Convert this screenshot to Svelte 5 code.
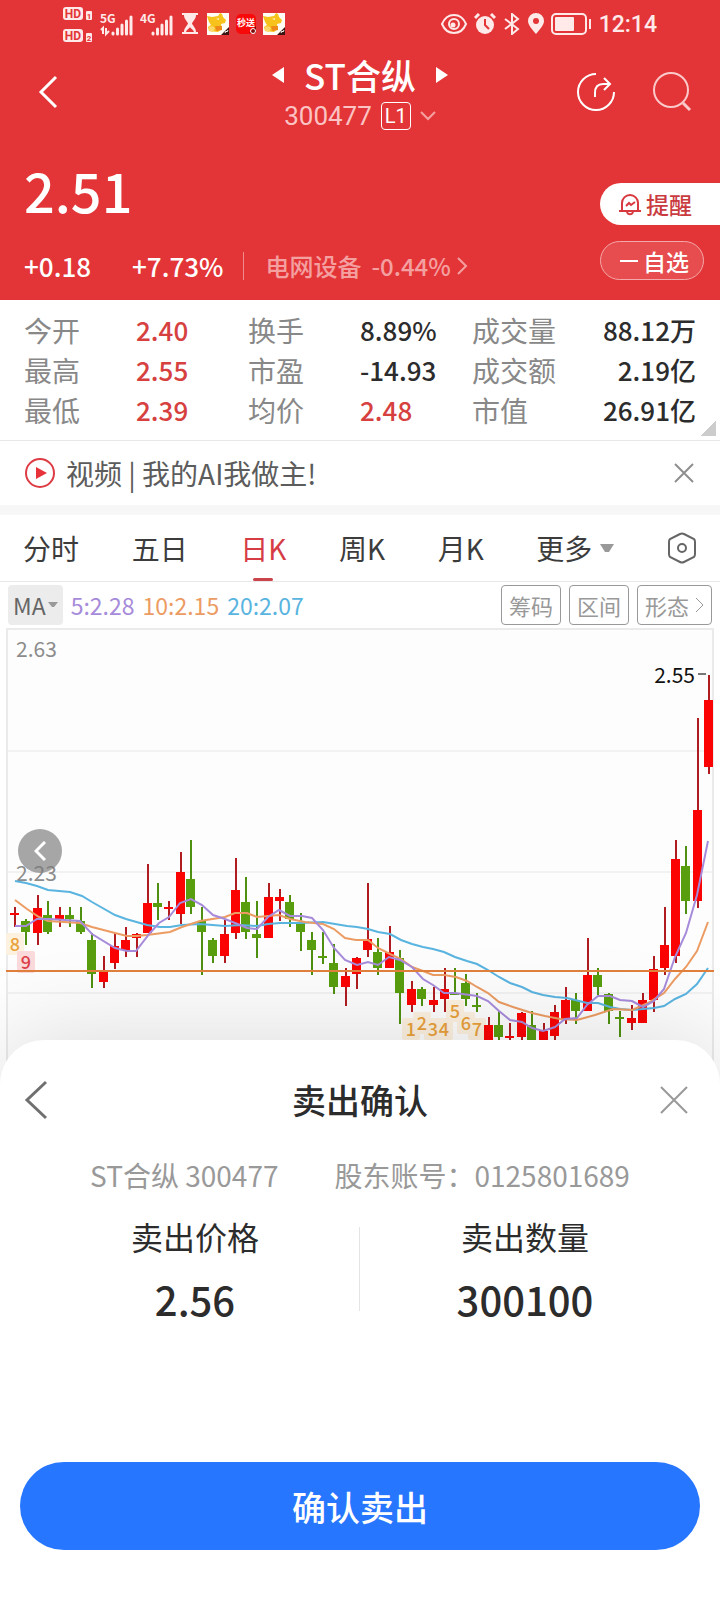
<script lang="ts">
  type Candle = [x: number, high: number, top: number, bottom: number, low: number, up: number];

  const stats = [
    { label: "今开", value: "2.40", up: true },
    { label: "换手", value: "8.89%" },
    { label: "成交量", value: "88.12万" },
    { label: "最高", value: "2.55", up: true },
    { label: "市盈", value: "-14.93" },
    { label: "成交额", value: "2.19亿" },
    { label: "最低", value: "2.39", up: true },
    { label: "均价", value: "2.48", up: true },
    { label: "市值", value: "26.91亿" },
  ];

  const tabs = ["分时", "五日", "日K", "周K", "月K"];
  let activeTab = $state("日K");

  // x, high, body top, body bottom, low, 1 = rise / 0 = fall
  const candles: Candle[] = [
    [15, 279, 285, 287, 299, 1], [26, 291, 293, 304, 317, 0], [38, 267, 280, 305, 317, 1],
    [48, 273, 287, 304, 306, 0], [60, 279, 287, 292, 299, 1], [70, 279, 287, 291, 299, 0],
    [81, 279, 293, 304, 306, 0], [92, 305, 312, 346, 360, 0], [104, 328, 343, 354, 360, 1],
    [115, 305, 318, 335, 341, 1], [126, 299, 312, 322, 329, 1], [137, 305, 306, 310, 329, 1],
    [148, 236, 275, 305, 305, 1], [158, 255, 275, 279, 292, 0], [169, 273, 279, 281, 292, 1],
    [181, 224, 244, 286, 296, 1], [191, 212, 251, 279, 286, 0], [202, 279, 293, 304, 347, 0],
    [213, 310, 312, 328, 335, 0], [225, 292, 306, 328, 335, 1], [236, 230, 262, 305, 311, 1],
    [246, 249, 274, 304, 311, 0], [257, 273, 306, 310, 330, 0], [269, 255, 269, 310, 310, 1],
    [280, 261, 269, 273, 293, 1], [290, 267, 274, 291, 299, 0], [301, 285, 295, 304, 323, 0],
    [312, 304, 312, 322, 347, 0], [323, 304, 328, 330, 336, 0], [334, 316, 335, 359, 366, 0],
    [346, 340, 348, 359, 378, 1], [357, 329, 330, 346, 361, 1], [368, 255, 311, 322, 329, 1],
    [378, 310, 324, 340, 347, 0], [390, 298, 324, 340, 340, 1], [400, 322, 330, 365, 396, 0],
    [412, 353, 361, 377, 384, 1], [422, 359, 361, 371, 378, 0], [434, 359, 372, 377, 384, 1],
    [445, 340, 361, 371, 384, 1], [455, 340, 365, 367, 367, 0], [466, 346, 355, 371, 378, 0],
    [477, 365, 377, 379, 384, 0], [489, 389, 397, 415, 415, 1], [499, 383, 397, 409, 415, 0],
    [510, 395, 408, 410, 415, 1], [522, 384, 385, 409, 415, 1], [532, 383, 397, 415, 415, 0],
    [544, 395, 403, 415, 415, 1], [555, 377, 384, 408, 415, 1], [566, 359, 372, 391, 396, 1],
    [576, 365, 372, 383, 396, 0], [588, 310, 347, 383, 383, 1], [598, 340, 347, 359, 367, 0],
    [609, 365, 366, 383, 396, 0], [620, 383, 389, 391, 409, 0], [632, 377, 390, 395, 402, 1],
    [643, 365, 372, 395, 395, 1], [654, 328, 341, 372, 384, 1], [665, 279, 317, 340, 347, 1],
    [676, 212, 231, 328, 335, 1], [686, 218, 238, 273, 286, 0], [698, 90, 182, 273, 280, 1],
    [709, 47, 72, 139, 146, 1],
  ];

  const averages = [
    {
      name: "20:2.07",
      color: "#5ab4e0",
      points:
        "15,253 26,255 37,258 48,262 70,264 82,268 92,274 115,287 126,291 147,297 160,299 170,299 182,297 200,296 225,298 240,297 257,298 268,296 280,295 300,295 323,294 347,298 357,299 368,301 378,304 390,306 401,312 412,316 423,319 433,321 444,324 455,329 467,333 477,336 488,342 499,349 510,355 522,359 532,364 543,367 555,369 567,370 587,375 598,375 610,379 620,381 632,382 643,381 654,380 664,378 675,371 686,366 697,356 708,340",
    },
    {
      name: "10:2.15",
      color: "#ec9c63",
      points:
        "15,272 27,281 39,289 48,293 80,295 92,299 115,305 127,308 137,308 147,307 170,304 182,299 200,293 225,289 235,285 247,285 257,289 279,287 290,291 305,294 323,296 334,301 345,310 356,312 368,312 378,320 390,326 401,331 412,339 423,343 433,347 444,347 456,349 467,353 477,359 488,365 499,374 513,379 532,385 545,388 560,391 577,392 595,387 613,381 632,382 648,375 664,365 675,351 686,339 697,323 708,294",
    },
    {
      name: "5:2.28",
      color: "#a78bdb",
      points:
        "15,298 26,298 37,291 50,291 80,293 92,306 115,320 127,323 136,323 150,305 159,295 169,289 180,275 191,271 202,277 213,287 225,291 240,297 247,300 257,301 268,289 279,282 290,288 302,288 312,290 323,302 334,320 345,332 357,337 368,334 378,337 389,329 400,332 412,339 423,351 433,357 444,365 455,365 477,368 488,373 499,383 510,392 522,394 532,400 543,403 555,399 565,391 577,390 587,377 598,368 610,368 620,372 632,373 643,379 654,373 664,361 675,329 686,305 697,267 708,213",
    },
  ];
  const legend = [...averages].reverse();

  const marks = [
    { n: 8, x: 15, y: 316 },
    { n: 9, x: 26, y: 334, hot: true },
    { n: 1, x: 411, y: 401 },
    { n: 2, x: 422, y: 395 },
    { n: 3, x: 433, y: 401 },
    { n: 4, x: 444, y: 401 },
    { n: 5, x: 455, y: 383 },
    { n: 6, x: 466, y: 395 },
    { n: 7, x: 477, y: 401 },
  ];
</script>

{#snippet dog()}
  <svg width="22" height="22" viewBox="0 0 22 22">
    <rect width="22" height="22" fill="#fffdf5" />
    <path d="M0 3l5 1 6-1 2-3 2 1 1 3 3 3-1 3-4 1 1 5-4 3-9-1-1-4 3-2-2-3z" fill="#f8c21c" />
    <path d="M2 14l3-1 3 2-2 4-4-1z" fill="#fad766" />
    <path d="M8 13h7v4l-6 1z" fill="#ef8a1a" />
    <path d="M9 6l3-1v2z" fill="#fff3c0" />
    <path d="M22 14v8h-8z" fill="#3c1512" />
    <path d="M18 20l1-2 1 1 1-2" fill="none" stroke="#fff" />
  </svg>
{/snippet}

{#snippet bars()}
  <path d="M13 32v-1M17.500 32v-5M22 32v-9M26.500 32v-13M31 32v-17" stroke="#ffe9e9" stroke-width="3" stroke-linecap="round" />
{/snippet}

<div class="page">
  <header>
    <div class="status">
      <div class="status-left">
        <svg class="hd" width="30" height="36" viewBox="0 0 30 36">
          <rect width="20" height="13" rx="3" fill="#ffe9e9" />
          <rect y="22" width="20" height="13" rx="3" fill="#ffe9e9" />
          <rect x="23" y="4" width="6" height="9" rx="1" fill="#ffe9e9" />
          <rect x="23" y="26" width="6" height="9" rx="1" fill="#ffe9e9" />
          <text x="10" y="11" class="hd-text">HD</text>
          <text x="10" y="33" class="hd-text">HD</text>
          <text x="26" y="12" class="hd-sim">1</text>
          <text x="26" y="34" class="hd-sim">2</text>
        </svg>
        <svg class="net" width="33" height="36" viewBox="0 0 33 36">
          <text x="0" y="21" class="gen">5G</text>
          <path d="M3 32v-6l-2 2M6 26v6l3-3" fill="none" stroke="#ffe9e9" stroke-width="2" />
          {@render bars()}
        </svg>
        <svg class="net" width="33" height="36" viewBox="0 0 33 36">
          <text x="0" y="21" class="gen">4G</text>
          {@render bars()}
        </svg>
        <svg class="glass" width="16" height="22" viewBox="0 0 16 22">
          <path d="M0 0h16v2H0zM0 19h16v2H0zM2 2h12c0 4-3 6-4 8.500 1 2.500 4 4.500 4 8.500H2c0-4 3-6 4-8.500C5 8 2 6 2 2z" fill="#ffe9e9" />
          <path d="M4 19c1-3 3-3 4-5 1 2 3 2 4 5z" fill="#e33537" />
        </svg>
        <div class="apps">
          {@render dog()}
          <svg width="20" height="22" viewBox="0 0 20 22">
            <rect y="1" width="20" height="20" rx="5" fill="#f90a0a" />
            <text x="10" y="13" class="app-text">秒送</text>
            <path d="M20 13v7h-7z" fill="#7d0d0d" />
            <circle cx="17" cy="18" r="2.500" fill="none" stroke="#fff" />
          </svg>
          {@render dog()}
        </div>
      </div>
      <div class="status-right">
        <svg width="26" height="22" viewBox="0 0 26 22" fill="none" stroke="#ffe9e9" stroke-width="2">
          <path d="M1 11c5-12 19-12 24 0-5 12-19 12-24 0z" />
          <circle cx="13" cy="11" r="5" />
          <circle cx="12" cy="12" r="2.500" fill="#ffe9e9" stroke="none" />
        </svg>
        <svg width="22" height="22" viewBox="0 0 22 22" fill="none">
          <circle cx="11" cy="12" r="9" fill="#ffe9e9" />
          <path d="M1 5l4-4M17 1l4 4" stroke="#ffe9e9" stroke-width="3" />
          <path d="M11 6v6l4 4" stroke="#e33537" stroke-width="2" />
        </svg>
        <svg width="18" height="22" viewBox="0 0 18 22" fill="none" stroke="#ffe9e9" stroke-width="2">
          <path d="M2 6l13 10-6 5V1l6 5L2 16" />
        </svg>
        <svg width="16" height="22" viewBox="0 0 16 22">
          <path d="M8 21C4 16 0 12 0 8a8 8 0 0 1 16 0c0 4-4 8-8 13z" fill="#ffe9e9" />
          <circle cx="8" cy="8" r="3" fill="#e33537" />
        </svg>
        <svg width="41" height="22" viewBox="0 0 41 22">
          <rect x="1" y="1" width="34" height="20" rx="4" fill="none" stroke="#ffe9e9" stroke-width="2" />
          <rect x="4" y="4" width="19" height="14" rx="1" fill="#ffe9e9" />
          <path d="M39 6v10" stroke="#ffe9e9" stroke-width="2" />
        </svg>
        <time>12:14</time>
      </div>
    </div>

    <nav>
      <button class="icon back" aria-label="返回">
        <svg width="20" height="34" viewBox="0 0 20 34" fill="none" stroke="#fff" stroke-width="3">
          <path d="M18 2L3 17l15 15" />
        </svg>
      </button>
      <div class="title">
        <h1>
          <button class="icon" aria-label="上一只">
            <svg width="12" height="18" viewBox="0 0 12 18"><path d="M12 1v16L0 9z" fill="#fff" /></svg>
          </button>
          <span>ST合纵</span>
          <button class="icon" aria-label="下一只">
            <svg width="12" height="18" viewBox="0 0 12 18"><path d="M0 1v16l12-8z" fill="#fff" /></svg>
          </button>
        </h1>
        <div class="code">
          <span>300477</span>
          <em>L1</em>
          <svg width="16" height="10" viewBox="0 0 16 10" fill="none" stroke="#f4a0a1" stroke-width="2">
            <path d="M1 1l7 7 7-7" />
          </svg>
        </div>
      </div>
      <div class="tools">
        <button class="icon" aria-label="分享">
          <svg width="40" height="40" viewBox="0 0 40 40" fill="none" stroke="#fff" stroke-width="2">
            <path d="M20 2a18 18 0 1 0 18 18" />
            <path d="M19 25v-4c0-6 3-9 8-9h6M28 6l6 6-6 6" />
          </svg>
        </button>
        <button class="icon" aria-label="搜索">
          <svg width="40" height="40" viewBox="0 0 40 40" fill="none" stroke="#fbc9c9" stroke-width="2">
            <circle cx="19" cy="18" r="17" />
            <path d="M31 31l7 7" stroke-width="3" />
          </svg>
        </button>
      </div>
    </nav>

    <section class="quote">
      <div>
        <strong class="price">2.51</strong>
        <div class="change">
          <span>+0.18</span>
          <span>+7.73%</span>
          <a href="#sector">
            电网设备 <b>-0.44%</b>
            <svg width="11" height="18" viewBox="0 0 11 18" fill="none" stroke="#f4a0a1" stroke-width="2">
              <path d="M1 1l8 8-8 8" />
            </svg>
          </a>
        </div>
      </div>
      <div class="actions">
        <button class="remind">
          <svg width="24" height="24" viewBox="0 0 24 24" fill="none" stroke="#d8393f" stroke-width="2">
            <path d="M4 19V11a8 8 0 0 1 16 0v8M1 19h22" />
            <path d="M8 14l3-3 2 2 4-3" />
            <path d="M9 20c1 3 5 3 6 0" />
          </svg>
          提醒
        </button>
        <button class="watch">
          <svg width="20" height="4" viewBox="0 0 20 4"><path d="M1 2h18" stroke="#fff" stroke-width="2" /></svg>
          自选
        </button>
      </div>
    </section>
  </header>

  <dl class="stats">
    {#each stats as item}
      <dt>{item.label}</dt>
      <dd class:up={item.up}>{item.value}</dd>
    {/each}
  </dl>

  <div class="notice">
    <svg width="32" height="32" viewBox="0 0 32 32">
      <circle cx="16" cy="16" r="14" fill="none" stroke="#dd3c44" stroke-width="2" />
      <path d="M12 10v12l11-6z" fill="#e8323a" />
    </svg>
    <a href="#video">视频 | 我的AI我做主!</a>
    <button class="icon" aria-label="关闭">
      <svg width="20" height="20" viewBox="0 0 20 20" stroke="#8f8f8f" stroke-width="2">
        <path d="M1 1l18 18M19 1L1 19" />
      </svg>
    </button>
  </div>

  <div class="tabs">
    {#each tabs as tab}
      <button class:active={tab === activeTab} onclick={() => (activeTab = tab)}>{tab}</button>
    {/each}
    <button class="more">
      更多
      <svg width="14" height="9" viewBox="0 0 14 9"><path d="M0 0h14L9 8H5z" fill="#999" /></svg>
    </button>
    <button aria-label="设置">
      <svg width="30" height="32" viewBox="0 0 30 32" fill="none" stroke="#666" stroke-width="2">
        <path d="M13 2q2-1 4 0l10 5q1 1 1 3v12q0 2-1 3l-10 5q-2 1-4 0L3 25q-1-1-1-3V10q0-2 1-3z" />
        <circle cx="15" cy="16" r="4" />
      </svg>
    </button>
  </div>

  <div class="toolbar">
    <button class="ma">
      MA
      <svg width="10" height="6" viewBox="0 0 10 6"><path d="M0 0h10L6 5H4z" fill="#999" /></svg>
    </button>
    {#each legend as line}
      <span style="color: {line.color}">{line.name}</span>
    {/each}
    <div class="chips">
      <button>筹码</button>
      <button>区间</button>
      <button>
        形态
        <svg width="9" height="16" viewBox="0 0 9 16" fill="none" stroke="#999"><path d="M1 1l7 7-7 7" /></svg>
      </button>
    </div>
  </div>

  <div class="chart">
    <svg class="kline" viewBox="0 0 720 452">
      <rect x="7" y="1" width="706" height="460" fill="#fdfdfd" stroke="#ebebeb" stroke-width="2" />
      <path d="M8 123h704M8 244h704M8 365h704" stroke="#f2f2f2" stroke-width="2" />
      <text x="16" y="29" class="scale">2.63</text>
      <text x="16" y="253" class="scale">2.23</text>

      {#each marks as m}
        <rect x={m.x - 9} y={m.y - 11} width="18" height="22" rx="2" fill={m.hot ? "#fadadb" : "#fdf1e0"} />
      {/each}

      {#each candles as [x, high, top, bottom, low, up]}
        <path d="M{x} {high}V{low}" stroke={up ? "#b01c20" : "#4f9010"} stroke-width="2" />
        <rect x={x - 5} y={top} width="9" height={bottom - top} fill={up ? "#fb0303" : "#589e0e"} />
      {/each}

      {#each averages as line}
        <polyline points={line.points} fill="none" stroke={line.color} stroke-width="2" />
      {/each}
      <path d="M6 343h708" stroke="#e0803c" stroke-width="2" />

      {#each marks as m}
        <text x={m.x} y={m.y + 7} class="mark" class:hot={m.hot}>{m.n}</text>
      {/each}

      <text x="695" y="55" class="peak">2.55</text>
      <path d="M698 46h8" stroke="#777" stroke-width="2" />
    </svg>
    <button class="icon expand" aria-label="展开">
      <svg width="12" height="20" viewBox="0 0 12 20" fill="none" stroke="#fff" stroke-width="3">
        <path d="M11 1l-9 9 9 9" />
      </svg>
    </button>
  </div>

  <section class="sheet">
    <div class="sheet-head">
      <button class="icon back" aria-label="返回">
        <svg width="24" height="40" viewBox="0 0 24 40" fill="none" stroke="#707070" stroke-width="3">
          <path d="M22 2L3 20l19 18" />
        </svg>
      </button>
      <h2>卖出确认</h2>
      <button class="icon close" aria-label="关闭">
        <svg width="28" height="28" viewBox="0 0 28 28" stroke="#999" stroke-width="2">
          <path d="M1 1l26 26M27 1L1 27" />
        </svg>
      </button>
    </div>
    <p class="account">
      <span>ST合纵 300477</span>
      <span>股东账号：0125801689</span>
    </p>
    <dl class="order">
      <div>
        <dt>卖出价格</dt>
        <dd>2.56</dd>
      </div>
      <div>
        <dt>卖出数量</dt>
        <dd>300100</dd>
      </div>
    </dl>
    <button class="confirm">确认卖出</button>
  </section>
</div>

<style>
  :global(body) {
    margin: 0;
    background: #fff;
  }

  .page {
    display: flex;
    flex-direction: column;
    min-height: 100vh;
    font-family: "Noto Sans CJK SC", Roboto, sans-serif;
    color: #2c2c2c;
  }

  button {
    padding: 0;
    border: 0;
    background: none;
    font: inherit;
    color: inherit;
    cursor: pointer;
  }

  a {
    color: inherit;
    text-decoration: none;
  }

  svg {
    display: block;
    flex-shrink: 0;
  }

  dl, dd, p, h1, h2 {
    margin: 0;
  }

  .icon {
    display: flex;
    align-items: center;
    justify-content: center;
  }

  .back {
    justify-self: start;
  }

  .close {
    justify-self: end;
  }

  header {
    background: #e33537;
    color: #fff;
  }

  .status {
    display: flex;
    justify-content: space-between;
    height: 48px;
    padding: 0 63px;
    color: #ffe9e9;
  }

  .status-left, .status-right, .apps {
    display: flex;
    align-items: center;
  }

  .status-left, .status-right, .apps {
    gap: 7px;
  }

  .glass, .apps {
    margin-left: 2px;
  }

  .hd {
    margin-top: 2px;
  }

  .hd-text, .hd-sim {
    fill: #e33537;
    font: 700 12px Roboto, sans-serif;
    text-anchor: middle;
  }

  .hd-sim {
    font-size: 8px;
  }

  .gen {
    fill: #ffe9e9;
    font: 700 12px "Liberation Sans Narrow", "Noto Sans CJK SC", sans-serif;
  }

  .net {
    margin-top: -8px;
  }

  .app-text {
    fill: #fff;
    font-size: 9px;
    font-weight: 700;
    text-anchor: middle;
  }

  time {
    font: 500 23px Roboto, sans-serif;
  }

  nav {
    box-sizing: border-box;
    display: grid;
    grid-template-columns: 1fr auto 1fr;
    align-items: center;
    height: 92px;
    padding: 0 28px 4px;
  }

  nav .back {
    margin-left: 10px;
  }

  .title {
    display: flex;
    flex-direction: column;
    align-items: center;
    gap: 7px;
  }

  h1 {
    display: flex;
    align-items: center;
    gap: 20px;
    font-size: 35px;
    font-weight: 500;
    line-height: 40px;
  }

  .code {
    display: flex;
    align-items: center;
    gap: 9px;
    font-family: Roboto, "Noto Sans CJK SC", sans-serif;
    font-size: 26px;
    line-height: 28px;
    color: #fbc3c3;
  }

  .code em {
    box-sizing: border-box;
    width: 30px;
    height: 28px;
    border: 1px solid #fff;
    border-radius: 4px;
    font-size: 20px;
    font-style: normal;
    line-height: 26px;
    text-align: center;
    color: #fff;
  }

  .tools {
    display: flex;
    justify-content: flex-end;
    gap: 36px;
  }

  .quote {
    display: flex;
    justify-content: space-between;
    height: 160px;
  }

  .price {
    display: block;
    padding: 20px 0 0 24px;
    font-size: 54px;
    font-weight: 500;
    line-height: 60px;
  }

  .change {
    display: flex;
    align-items: center;
    margin-top: 28px;
    padding-left: 24px;
    font-size: 26px;
    font-weight: 500;
    line-height: 36px;
  }

  .change span {
    margin-right: 41px;
  }

  .change span + span {
    margin-right: 20px;
  }

  .change a {
    display: flex;
    align-items: center;
    gap: 10px;
    padding-left: 21px;
    border-left: 1px solid #f08a8b;
    font-size: 24px;
    line-height: 28px;
    color: #f4a0a1;
  }

  .change b {
    font-weight: 500;
  }

  .change svg {
    margin-left: -4px;
  }

  .actions {
    display: flex;
    flex-direction: column;
    gap: 16px;
    padding-top: 43px;
  }

  .actions button {
    box-sizing: border-box;
    display: flex;
    align-items: center;
    gap: 4px;
    padding-left: 18px;
    font-size: 23px;
    font-weight: 500;
    line-height: 36px;
  }

  .actions .remind {
    width: 120px;
    height: 42px;
    border-radius: 21px 0 0 21px;
    background: #fff;
    color: #c93b3f;
  }

  .actions .watch {
    width: 104px;
    height: 39px;
    border: 1px solid #f3a9aa;
    border-radius: 20px;
    background: #e74c4e;
  }

  .stats {
    display: grid;
    grid-template-columns: repeat(6, 1fr);
    padding: 10px 24px;
    border-bottom: 1px solid #e8e8e8;
    background: linear-gradient(to top left, #ccc 11px, transparent 11px) right 4px bottom 4px / 16px 16px no-repeat;
    line-height: 40px;
  }

  .stats dt {
    font-size: 28px;
    color: #888;
    white-space: nowrap;
  }

  .stats dd {
    font-size: 26px;
    font-weight: 500;
    white-space: nowrap;
  }

  .stats dd:nth-of-type(3n) {
    text-align: right;
  }

  .stats .up {
    color: #d6413f;
  }

  .notice {
    display: flex;
    align-items: center;
    gap: 10px;
    height: 64px;
    padding: 0 26px 0 24px;
    border-bottom: 10px solid #f7f7f7;
    font-size: 28px;
    color: #5c5c5c;
  }

  .notice .icon {
    margin-left: auto;
  }

  .tabs {
    display: flex;
    justify-content: space-between;
    height: 66px;
    padding: 0 23px;
    border-bottom: 1px solid #e8e8e8;
    font-size: 28px;
    color: #3c3c3c;
  }

  .tabs button {
    display: flex;
    align-items: center;
    gap: 8px;
  }

  .tabs .active {
    position: relative;
    color: #d63c43;
  }

  .tabs .active::after {
    content: "";
    position: absolute;
    bottom: 0;
    left: 50%;
    width: 20px;
    height: 3px;
    margin-left: -10px;
    border-radius: 2px;
    background: #cc444b;
  }

  .toolbar {
    display: flex;
    align-items: center;
    gap: 8px;
    height: 46px;
    padding: 0 8px;
    font-size: 23px;
  }

  .ma {
    display: flex;
    align-items: center;
    gap: 2px;
    height: 40px;
    padding: 0 5px;
    border-radius: 4px;
    background: #ececec;
    color: #666;
  }

  .chips {
    display: flex;
    gap: 8px;
    margin-left: auto;
  }

  .chips button {
    display: flex;
    align-items: center;
    gap: 6px;
    height: 40px;
    padding: 0 7px;
    border: 1px solid #999;
    border-radius: 4px;
    box-sizing: border-box;
    font-size: 22px;
    color: #999;
  }

  .chart {
    position: relative;
  }

  .kline {
    width: 100%;
  }

  .scale {
    fill: #8c8c8c;
    font-size: 21px;
  }

  .peak {
    fill: #111;
    font-size: 21px;
    text-anchor: end;
  }

  .mark {
    fill: #e9a13b;
    font-size: 18px;
    font-weight: 500;
    text-anchor: middle;
  }

  .mark.hot {
    fill: #dc4048;
  }

  .expand {
    position: absolute;
    top: 201px;
    left: 18px;
    width: 44px;
    height: 44px;
    border-radius: 50%;
    background: rgba(120, 120, 120, 0.65);
  }

  .sheet {
    position: relative;
    display: flex;
    flex: 1;
    flex-direction: column;
    margin-top: -40px;
    padding: 30px 20px 50px;
    border-radius: 44px 44px 0 0;
    background: #fff;
    box-shadow: 0 0 100px rgba(0, 0, 0, 0.14);
  }

  .sheet-head {
    display: grid;
    grid-template-columns: 1fr auto 1fr;
    align-items: center;
    padding: 0 11px 0 4px;
  }

  h2 {
    font-size: 34px;
    font-weight: 500;
    line-height: 60px;
  }

  .sheet-head {
    padding: 0 4px;
  }

  .sheet-head .close {
    margin-right: 8px;
  }

  .account {
    display: flex;
    justify-content: center;
    gap: 56px;
    margin-top: 25px;
    font-size: 28px;
    line-height: 40px;
    color: #999;
  }

  .order {
    display: flex;
    margin: 17px 10px 0;
    text-align: center;
  }

  .order div {
    position: relative;
    flex: 1;
  }

  .order div + div::before {
    content: "";
    position: absolute;
    top: 15px;
    bottom: 20px;
    left: -1px;
    width: 1px;
    background: #e4e4e4;
  }

  .order dt {
    font-size: 32px;
    line-height: 48px;
  }

  .order dd {
    margin-top: 7px;
    font-size: 40px;
    font-weight: 500;
    line-height: 64px;
  }

  .confirm {
    height: 88px;
    margin-top: auto;
    border-radius: 44px;
    background: #2676ff;
    color: #fff;
    font-size: 34px;
    font-weight: 500;
  }
</style>
